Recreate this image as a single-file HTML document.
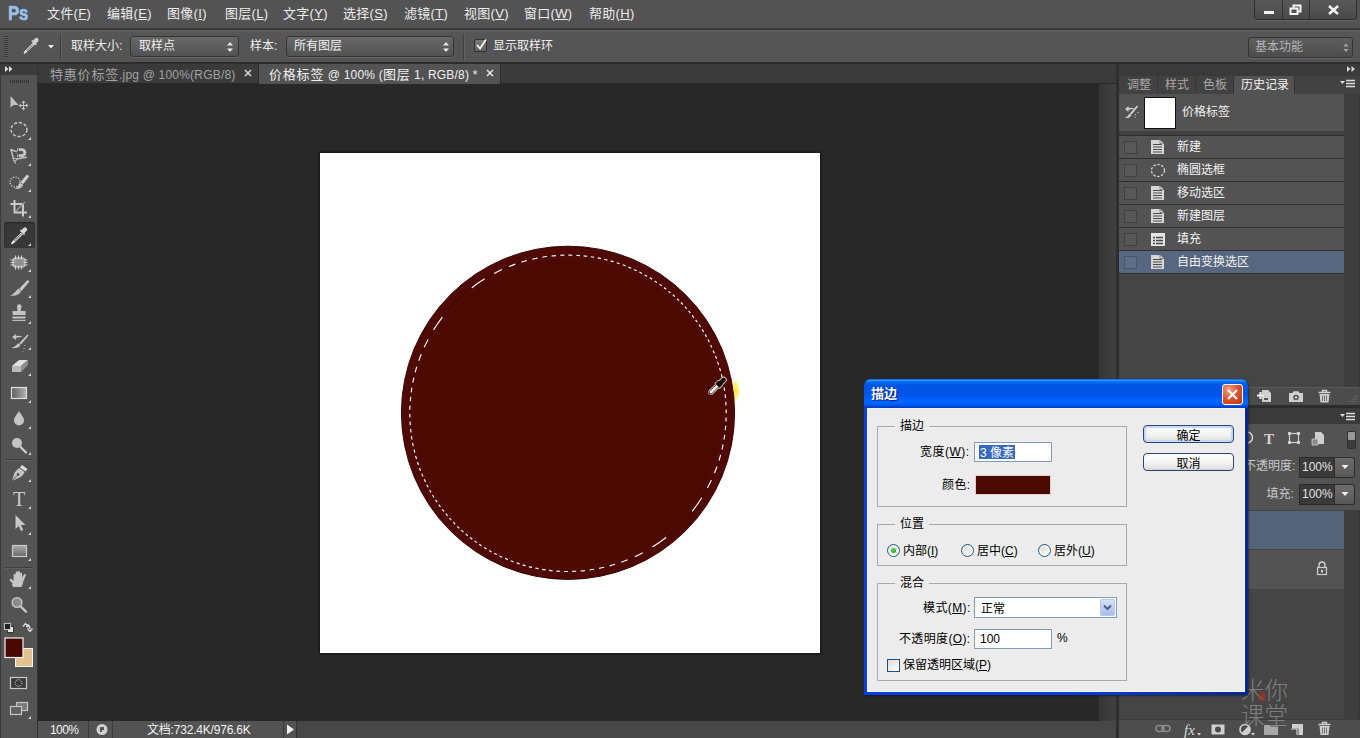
<!DOCTYPE html>
<html lang="zh-CN">
<head>
<meta charset="utf-8">
<title>Photoshop - 描边</title>
<style>
*{box-sizing:border-box;margin:0;padding:0}
html,body{width:1360px;height:738px;overflow:hidden;background:#282828}
body{position:relative;font-family:"Liberation Sans","Noto Sans CJK SC",sans-serif;font-size:12px;color:#e6e6e6}
.abs{position:absolute}
.t{position:absolute;white-space:nowrap;line-height:16px}
u{text-decoration:underline;text-underline-offset:1px}
/* menu bar */
#menubar{left:0;top:0;width:1360px;height:29px;background:#535353}
#menuline{left:0;top:28px;width:1360px;height:2px;background:#383838}
#optbar{left:0;top:30px;width:1360px;height:33px;background:linear-gradient(#626262,#565656 8%,#535353)}
#optline{left:0;top:62px;width:1360px;height:2px;background:#3a3a3a}
.menu{top:6px;font-size:13px;color:#ececec;letter-spacing:0.3px}
.dd{position:absolute;border:1px solid #343434;border-radius:3px;background:linear-gradient(#686868,#525252);box-shadow:0 1px 0 rgba(255,255,255,.12)}
/* tool panel */
#tools{left:0;top:64px;width:37px;height:674px;background:#535353}
#tabstrip{left:37px;top:64px;width:1079px;height:19px;background:#3b3b3b}
#workspace{left:38px;top:83px;width:1077px;height:638px;background:#282828}
#status{left:38px;top:721px;width:1077px;height:17px;background:#535353}
/* right */
#right{left:1116px;top:64px;width:244px;height:674px;background:#424242}
.hc{left:1124px;width:13px;height:13px;background:#585858;border:1px solid #404040}
.cj{font-size:13px;letter-spacing:.8px}.la{font-size:12px;letter-spacing:.2px}
#optline{background:#2d2d2d}
</style>
</head>
<body>
<!-- MENUBAR -->
<div id="menubar" class="abs"></div>
<div id="menuline" class="abs"></div>
<div class="t" style="left:8px;top:2px;font-size:20px;line-height:22px;font-weight:bold;color:#9cc0e8;letter-spacing:-0.3px;transform:scaleX(.84);transform-origin:0 0;-webkit-text-stroke:.7px #9cc0e8;text-shadow:0 -1px 0 #2c4a78">Ps</div>
<div class="t menu" style="left:47px">文件(<u>F</u>)</div>
<div class="t menu" style="left:107px">编辑(<u>E</u>)</div>
<div class="t menu" style="left:167px">图像(<u>I</u>)</div>
<div class="t menu" style="left:225px">图层(<u>L</u>)</div>
<div class="t menu" style="left:283px">文字(<u>Y</u>)</div>
<div class="t menu" style="left:343px">选择(<u>S</u>)</div>
<div class="t menu" style="left:404px">滤镜(<u>T</u>)</div>
<div class="t menu" style="left:464px">视图(<u>V</u>)</div>
<div class="t menu" style="left:524px">窗口(<u>W</u>)</div>
<div class="t menu" style="left:589px">帮助(<u>H</u>)</div>
<!-- OPTIONS BAR -->
<div id="optbar" class="abs"></div>
<div id="optline" class="abs"></div>
<div class="t" style="left:71px;top:38px;color:#f0f0f0">取样大小:</div>
<div class="dd" style="left:130px;top:36px;width:109px;height:21px"></div>
<div class="t" style="left:139px;top:38px;color:#f0f0f0">取样点</div>
<div class="t" style="left:250px;top:38px;color:#f0f0f0">样本:</div>
<div class="dd" style="left:286px;top:36px;width:168px;height:21px"></div>
<div class="t" style="left:294px;top:38px;color:#f0f0f0">所有图层</div>
<div class="t" style="left:493px;top:38px;color:#f0f0f0">显示取样环</div>
<!-- TOOLS / TABS / WORKSPACE -->
<div id="tools" class="abs"></div>
<div id="tabstrip" class="abs"></div>
<div id="workspace" class="abs"></div>
<div id="status" class="abs"></div>
<div id="right" class="abs"></div>
<!-- WINDOW CONTROLS -->
<div class="abs" style="left:1254px;top:0;width:103px;height:20px;border:1px solid #2e2e2e;border-top:none;border-radius:0 0 4px 4px;background:linear-gradient(#595959,#4a4a4a);box-shadow:0 1px 0 rgba(255,255,255,.1)"></div>
<div class="abs" style="left:1282px;top:0;width:1px;height:19px;background:#333"></div>
<div class="abs" style="left:1309px;top:0;width:1px;height:19px;background:#333"></div>
<svg class="abs" style="left:1254px;top:0" width="103" height="20" viewBox="1254 0 103 20">
<rect x="1264" y="11" width="10" height="3" fill="#f2f2f2"/>
<path d="M1293.5 5.5h7v6h-7z" fill="none" stroke="#f2f2f2" stroke-width="2"/>
<path d="M1290.5 8.5h7v5.5h-7z" fill="#525252" stroke="#f2f2f2" stroke-width="2"/>
<path d="M1329 6l9 8M1338 6l-9 8" stroke="#f2f2f2" stroke-width="2.6"/>
</svg>
<!-- options bar extras -->
<div class="abs" style="left:4px;top:36px;width:4px;height:21px;background:repeating-linear-gradient(#3a3a3a 0 1px,#5c5c5c 1px 2px)"></div>
<svg class="abs" style="left:20px;top:34px" width="40" height="26" viewBox="20 34 40 26">
<path d="M25.5 53l-1.5 0.5 0.5-2 8.5-8.5 1.5 1.5z" fill="#e6e6e6" stroke="#e6e6e6" stroke-width="0.6"/>
<path d="M26.5 51l6.5-6.5" stroke="#555" stroke-width="1"/>
<path d="M31.5 41.5l4 4 1-1-0.5-1 2-2a2 2 0 00-3-3l-2 2-1-0.5z" fill="#d0d0d0"/>
<path d="M48 45h6l-3 3.5z" fill="#e8e8e8"/>
</svg>
<div class="abs" style="left:60px;top:34px;width:1px;height:26px;background:#3e3e3e"></div>
<div class="abs" style="left:61px;top:34px;width:1px;height:26px;background:#626262"></div>
<svg class="abs" style="left:225px;top:40px" width="10" height="14" viewBox="0 0 10 14"><path d="M2 5.5l3-3.5 3 3.5zM2 8.5l3 3.5 3-3.5z" fill="#e8e8e8"/></svg>
<svg class="abs" style="left:441px;top:40px" width="10" height="14" viewBox="0 0 10 14"><path d="M2 5.5l3-3.5 3 3.5zM2 8.5l3 3.5 3-3.5z" fill="#e8e8e8"/></svg>
<div class="abs" style="left:463px;top:34px;width:1px;height:26px;background:#3e3e3e"></div>
<div class="abs" style="left:464px;top:34px;width:1px;height:26px;background:#626262"></div>
<div class="abs" style="left:474px;top:39px;width:13px;height:13px;border:1px solid #2f2f2f;background:linear-gradient(#787878,#626262);border-radius:2px"></div>
<svg class="abs" style="left:474px;top:36px" width="16" height="16" viewBox="0 0 16 16"><path d="M3 9l3 3.5 6-9" fill="none" stroke="#f0f0f0" stroke-width="1.8"/></svg>
<div class="dd" style="left:1248px;top:37px;width:105px;height:21px;background:linear-gradient(#5e5e5e,#4c4c4c)"></div>
<div class="t" style="left:1255px;top:39px;color:#b4b4b4">基本功能</div>
<svg class="abs" style="left:1341px;top:41px" width="10" height="14" viewBox="0 0 10 14"><path d="M2.5 5.5l2.5-3 2.5 3zM2.5 8l2.5 3 2.5-3z" fill="#a8a8a8"/></svg>
<!-- DOC TABS -->
<div class="abs" style="left:258px;top:64px;width:243px;height:20px;background:#535353;border-left:1px solid #2c2c2c;border-right:1px solid #2c2c2c"></div>
<div class="t" id="tab1" style="left:50px;top:66px;color:#a2a2a2;line-height:17px"><span class="cj">特惠价标签</span><span class="la">.jpg @ 100%(RGB/8)</span></div>
<div class="t" id="tab2" style="left:269px;top:66px;color:#f0f0f0;line-height:17px"><span class="cj">价格标签</span><span class="la"> @ 100% (</span><span class="cj">图层</span><span class="la"> 1, RGB/8) *</span></div>
<svg class="abs" style="left:244px;top:69px" width="8" height="8" viewBox="0 0 8 8"><path d="M1 1l6 6M7 1l-6 6" stroke="#d8d8d8" stroke-width="1.5"/></svg>
<svg class="abs" style="left:486px;top:69px" width="8" height="8" viewBox="0 0 8 8"><path d="M1 1l6 6M7 1l-6 6" stroke="#e8e8e8" stroke-width="1.5"/></svg>
<!-- scrollbar column + status -->
<div class="abs" style="left:1099px;top:84px;width:17px;height:637px;background:linear-gradient(90deg,#363636,#404040)"></div>
<div class="abs" style="left:1116px;top:64px;width:3px;height:674px;background:#2e2e2e"></div>
<div class="abs" style="left:38px;top:721px;width:1078px;height:17px;background:#474747"></div>
<div class="abs" style="left:38px;top:721px;width:258px;height:17px;background:#535353"></div>
<div class="abs" style="left:88px;top:721px;width:1px;height:17px;background:#3c3c3c"></div>
<div class="abs" style="left:112px;top:721px;width:1px;height:17px;background:#3c3c3c"></div>
<div class="abs" style="left:283px;top:721px;width:1px;height:17px;background:#3c3c3c"></div>
<div class="abs" style="left:296px;top:721px;width:1px;height:17px;background:#333"></div>
<div class="t" style="left:50px;top:722px;color:#f2f2f2;letter-spacing:-.6px">100%</div>
<div class="t" style="left:147px;top:722px;color:#f2f2f2;letter-spacing:-.2px">文档:732.4K/976.6K</div>
<svg class="abs" style="left:94px;top:722px" width="16" height="15" viewBox="0 0 16 15"><circle cx="8" cy="7.5" r="5.5" fill="#d0d0d0"/><path d="M6 5h4v3h-2v2h-2z" fill="#555"/></svg>
<svg class="abs" style="left:285px;top:723px" width="10" height="13" viewBox="0 0 10 13"><path d="M2 1.5l7 5-7 5z" fill="#f0f0f0"/></svg>
<!-- TOOL PANEL ICONS -->
<div class="abs" style="left:0;top:64px;width:38px;height:11px;background:#3b3b3b"></div>
<div class="abs" style="left:0;top:64px;width:1px;height:674px;background:#3a3a3a"></div>
<div class="abs" style="left:37px;top:64px;width:1px;height:674px;background:#333"></div>
<div class="abs" style="left:4px;top:222px;width:31px;height:26px;background:#383838;border-radius:3px;box-shadow:inset 0 1px 2px #222"></div>
<svg class="abs" style="left:0;top:64px" width="38" height="674" viewBox="0 64 38 674" fill="none" stroke="none">
<g fill="#e0e0e0"><path d="M5 66l3.5 3L5 72zM9 66l3.5 3L9 72z"/></g>
<g fill="#333"><path d="M10 80h1v3h-1zM12 80h1v3h-1zM14 80h1v3h-1zM16 80h1v3h-1zM18 80h1v3h-1zM20 80h1v3h-1zM22 80h1v3h-1zM24 80h1v3h-1zM26 80h1v3h-1zM28 80h1v3h-1z"/></g>
<g fill="#d2d2d2">
<path d="M31 137v3h-3zM31 163v3h-3zM31 189v3h-3zM31 215v3h-3zM31 243v3h-3zM31 269v3h-3zM31 295v3h-3zM31 321v3h-3zM31 347v3h-3zM31 373v3h-3zM31 400v3h-3zM31 426v3h-3zM31 452v3h-3zM31 479v3h-3zM31 506v3h-3zM31 532v3h-3zM31 558v3h-3zM31 586v3h-3zM31 716v3h-3z" transform="translate(0,0)"/>
</g>
<!-- move -->
<path d="M10.5 96v11.5l3-2.5h5z" fill="#c4c4c4"/>
<path d="M23.5 100.5l2 2.5h-1.5v2h2v-1.5l2.5 2-2.5 2v-1.5h-2v2h1.5l-2 2.5-2-2.5h1.5v-2h-2v1.5l-2.5-2 2.5-2v1.5h2v-2h-1.5z" fill="#c4c4c4"/>
<!-- ellipse marquee -->
<ellipse cx="19" cy="129.5" rx="8" ry="7" stroke="#cacaca" stroke-width="1.4" stroke-dasharray="3.2 1.8"/>
<!-- lasso (magnetic poly) -->
<path d="M17 151.8L11 149.5l2.7 10 13-2.3" stroke="#c4c4c4" stroke-width="1.4" stroke-linejoin="round" fill="none"/>
<path d="M17 148.3h5a4.3 4.3 0 010 8.6h-5v-2.6h4.8a1.7 1.7 0 000-3.4H17z" fill="#c8c8c8"/>
<path d="M18.3 148.3v2.6M18.3 154.3v2.6" stroke="#555" stroke-width="1"/>
<rect x="13.2" y="158.3" width="3" height="2.4" fill="#535353" stroke="#c4c4c4" stroke-width=".8"/>
<path d="M14.5 161l1 2.5" stroke="#c4c4c4" stroke-width="1.3"/>
<!-- quick selection -->
<circle cx="15" cy="182" r="5" stroke="#d0d0d0" stroke-width="1.3" stroke-dasharray="1.2 1.420"/>
<path d="M27 174.5l2.2 1.8-6 7.7-2.7-2z" fill="#d0d0d0"/>
<path d="M20 182.5l3.2 2.5c-1.2 3-4.5 4.5-8.5 4 2.3-1.2 3.8-3.2 5.3-6.5z" fill="#c4c4c4"/>
<!-- crop -->
<path d="M14.5 200v12.5h12.5M10.5 204h12.5v12.5" stroke="#cacaca" stroke-width="2"/>
<path d="M16 211l9-9" stroke="#9a9a9a" stroke-width="1.2"/>
<!-- eyedropper (selected) -->
<path d="M13 243.5l-1.5 0.5 0.5-2 9-9 1.5 1.5z" fill="#ededed" stroke="#ededed" stroke-width="0.6"/>
<path d="M14.3 241l7-7" stroke="#444" stroke-width="1"/>
<path d="M20 231l4 4 1-1-0.5-1 2-2a2 2 0 00-3-3l-2 2-1-0.5z" fill="#d8d8d8"/>
<!-- patch / healing -->
<rect x="13" y="258" width="12" height="9" rx="2" fill="#8e8e8e" stroke="#d2d2d2" stroke-width="1"/>
<path d="M15.5 255.5v4M18.5 255.5v4M21.5 255.5v4M15.5 265.5v4M18.5 265.5v4M21.5 265.5v4M10.5 260h4M10.5 262.5h4M10.5 265h4M23.5 260h4M23.5 262.5h4M23.5 265h4" stroke="#d6d6d6" stroke-width="1.1"/>
<!-- brush -->
<path d="M27.5 280l2 1.5-8 9.5-2.5-2z" fill="#cacaca"/>
<path d="M18 288.5l3 2.8c-1.5 3.5-5.5 5-11 4.2 3.5-1.2 5.5-3.5 8-7z" fill="#c4c4c4"/>
<!-- stamp -->
<path d="M17 306.5a2.3 2.3 0 014.6 0c0 1.5-1 2.5-1 4.5h5v4h-13v-4h5c0-2-0.6-3-0.6-4.5z" fill="#c4c4c4"/>
<rect x="12.5" y="316.5" width="13" height="2" fill="#c4c4c4"/>
<rect x="12.5" y="319.8" width="13" height="1.2" fill="#bdbdbd"/>
<!-- history brush -->
<path d="M27.5 334.5l1 1-7.5 9-1.5-1.5z" fill="#cacaca"/>
<path d="M18.5 343l2 2c-1.5 3-5 3.5-9.5 3 3.5-1 5-2.5 7.5-5z" fill="#c4c4c4"/>
<path d="M12 337l4-3v2c3-0.5 5 0 6.5 1-2.5 0-4.5 0.3-6.5 1v2z" fill="#c4c4c4"/>
<path d="M25 345v1M24 348v1M23 351v0.5" stroke="#c4c4c4" stroke-width="1"/>
<!-- eraser -->
<path d="M12 366l7-6h9l-7 6z" fill="#e0e0e0"/>
<path d="M12 366h9v6h-9z" fill="#b8b8b8"/>
<path d="M21 366l7-6v5l-7 7z" fill="#8e8e8e"/>
<!-- gradient -->
<defs><linearGradient id="gr1" x1="0" x2="1"><stop offset="0" stop-color="#5e5e5e"/><stop offset="1" stop-color="#b4b4b4"/></linearGradient>
<linearGradient id="gr2" x1="0" x2="0" y1="0" y2="1"><stop offset="0" stop-color="#a8a8a8"/><stop offset="1" stop-color="#6c6c6c"/></linearGradient></defs>
<rect x="11.5" y="387.5" width="15" height="11" fill="url(#gr1)" stroke="#dcdcdc" stroke-width="1.2"/>
<!-- blur drop -->
<path d="M19 411c2.5 4 5 6.5 5 9.5a5 5 0 01-10 0c0-3 2.5-5.5 5-9.5z" fill="#c4c4c4"/>
<!-- dodge -->
<circle cx="17" cy="443" r="5" fill="#c4c4c4"/>
<path d="M20.5 447l5.5 5.5" stroke="#d0d0d0" stroke-width="2.2" stroke-linecap="round"/>
<!-- separators -->
<path d="M5 459.5h28M5 567.5h28" stroke="#3e3e3e" stroke-width="1"/>
<path d="M5 460.5h28M5 568.5h28" stroke="#606060" stroke-width="1"/>
<!-- pen -->
<path d="M22 465l5.5 4-2 2.5-5.5-4z" fill="#dedede"/>
<path d="M19.5 468l5 4c-1 3-3 5-6 6l-6.5 3 2-7c1-2.5 3-4.5 5.5-6z" fill="#c4c4c4"/>
<circle cx="18" cy="474.5" r="1.3" fill="#444"/>
<path d="M12 481l5-5.5" stroke="#444" stroke-width="0.8"/>
<!-- T -->
<text x="19" y="506" text-anchor="middle" font-family="Liberation Serif,serif" font-size="20" fill="#cacaca">T</text>
<!-- path select arrow -->
<path d="M15.5 515v14l3.2-3 2.3 5 2.2-1-2.3-5h4.6z" fill="#c8c8c8"/>
<!-- rectangle -->
<rect x="12.5" y="545.5" width="14" height="11" fill="url(#gr2)" stroke="#c8c8c8" stroke-width="1.2"/>
<!-- hand -->
<g transform="translate(19.5,580.5) scale(1.2) translate(-19,-576)"><path d="M13.5 579l-2.5-3c-0.8-1 0.5-2 1.5-1l1.5 1.5v-5c0-1.2 1.8-1.2 1.8 0v-2c0-1.2 1.8-1.2 1.8 0v-0.5c0-1.2 1.8-1.2 1.8 0v1.5c0-1.2 1.8-1.2 1.8 0v3l1.5-2.5c0.7-1 2-0.3 1.5 0.8l-2 5c-0.5 2-1 3.7-1.5 4.7h-7c-0.5-1-0.7-1.5-1.2-2.5z" fill="#c4c4c4"/></g>
<!-- zoom -->
<circle cx="17" cy="602.5" r="4.8" fill="#8a8a8a" stroke="#c4c4c4" stroke-width="1.6"/>
<path d="M20.8 606.5l5.2 5.2" stroke="#c4c4c4" stroke-width="2.4" stroke-linecap="round"/>
<!-- default colors / swap -->
<rect x="7.5" y="626.5" width="6" height="6" fill="#e4e4e4" stroke="#222" stroke-width="0.8"/>
<rect x="4.5" y="623.5" width="6" height="6" fill="#222" stroke="#ddd" stroke-width="0.8"/>
<path d="M23 626.5l2.5-3 2.5 3h-1.8M25.5 624.5c3 0 4.5 1.5 4.5 4.5M27.5 628.5l2.5 3 2.5-3" stroke="#d8d8d8" stroke-width="1.3" fill="none"/>
<!-- swatches -->
<rect x="15.5" y="648.5" width="17" height="18" fill="#e3c28e" stroke="#f4f4f4" stroke-width="1"/>
<rect x="5" y="638" width="18" height="19.5" fill="#4b0802" stroke="#f4f4f4" stroke-width="1.2"/>
<!-- quick mask -->
<rect x="10.5" y="677.5" width="16" height="11" fill="#3a3a3a" stroke="#cacaca" stroke-width="1.2"/>
<circle cx="18.5" cy="683" r="3.3" stroke="#e0e0e0" stroke-width="1" stroke-dasharray="1 1"/>
<!-- screen mode -->
<rect x="16.5" y="702.5" width="11" height="8" fill="#7a7a7a" stroke="#c4c4c4" stroke-width="1.2"/>
<rect x="10.5" y="706.5" width="11" height="8" fill="#606060" stroke="#c4c4c4" stroke-width="1.2"/>
</svg>
<!-- RIGHT PANELS -->
<div class="abs" style="left:1119px;top:64px;width:241px;height:12px;background:#3a3a3a"></div>
<svg class="abs" style="left:1346px;top:65px" width="10" height="8" viewBox="0 0 10 8"><path d="M1 1l3.5 3L1 7zM5.5 1L9 4 5.5 7z" fill="#d8d8d8"/></svg>
<div class="abs" style="left:1119px;top:76px;width:241px;height:18px;background:#424242"></div>
<div class="abs" style="left:1157px;top:76px;width:1px;height:17px;background:#353535"></div>
<div class="abs" style="left:1195px;top:76px;width:1px;height:17px;background:#353535"></div>
<div class="abs" style="left:1233px;top:76px;width:62px;height:18px;background:#535353;border-left:1px solid #333;border-right:1px solid #333"></div>
<div class="t" style="left:1127px;top:77px;color:#a8a8a8">调整</div>
<div class="t" style="left:1165px;top:77px;color:#a8a8a8">样式</div>
<div class="t" style="left:1203px;top:77px;color:#a8a8a8">色板</div>
<div class="t" style="left:1241px;top:77px;color:#f2f2f2">历史记录</div>
<svg class="abs" style="left:1340px;top:79px" width="16" height="10" viewBox="0 0 16 10"><path d="M0 2h5l-2.5 3z" fill="#ddd"/><path d="M6 1.5h9M6 4.5h9M6 7.5h9" stroke="#ddd" stroke-width="1.3"/></svg>
<!-- history body -->
<div class="abs" style="left:1119px;top:94px;width:241px;height:294px;background:#454545"></div>
<div class="abs" style="left:1344px;top:94px;width:16px;height:294px;background:linear-gradient(90deg,#3e3e3e,#3e3e3e 85%,#343434)"></div>
<div class="abs" style="left:1119px;top:94px;width:225px;height:37px;background:#535353"></div>
<div class="abs" style="left:1119px;top:131px;width:225px;height:4px;background:#404040"></div>
<div class="abs" style="left:1144px;top:97px;width:32px;height:32px;background:#fff;border:1px solid #111"></div>
<svg class="abs" style="left:1123px;top:103px" width="18" height="18" viewBox="0 0 18 18"><path d="M14 2.5l1 1-6.5 8-1.5-1.2z" fill="#d8d8d8"/><path d="M6.5 10.5l2 1.8c-1.3 2.5-3.5 3-7 2.7 2.5-1 3.5-2.3 5-4.5z" fill="#ccc"/><path d="M2 6l3.5-3v2c2.5-.5 4.5 0 6 1-2.5 0-4 .3-6 1v2z" fill="#ccc"/><path d="M12.5 11v1M12 13.5v1M15 9v1" stroke="#ccc"/></svg>
<div class="t" style="left:1182px;top:104px;color:#f2f2f2">价格标签</div>
<div class="abs" style="left:1119px;top:136px;width:225px;height:22px;background:#535353"></div>
<div class="abs" style="left:1119px;top:159px;width:225px;height:22px;background:#535353"></div>
<div class="abs" style="left:1119px;top:182px;width:225px;height:22px;background:#535353"></div>
<div class="abs" style="left:1119px;top:205px;width:225px;height:22px;background:#535353"></div>
<div class="abs" style="left:1119px;top:228px;width:225px;height:22px;background:#535353"></div>
<div class="abs" style="left:1119px;top:251px;width:225px;height:22px;background:#586780"></div>
<div class="abs" style="left:1119px;top:135px;width:225px;height:1px;background:#303030"></div><div class="abs" style="left:1119px;top:158px;width:225px;height:1px;background:#303030"></div><div class="abs" style="left:1119px;top:181px;width:225px;height:1px;background:#303030"></div><div class="abs" style="left:1119px;top:204px;width:225px;height:1px;background:#303030"></div><div class="abs" style="left:1119px;top:227px;width:225px;height:1px;background:#303030"></div><div class="abs" style="left:1119px;top:250px;width:225px;height:1px;background:#303030"></div><div class="abs" style="left:1119px;top:273px;width:225px;height:1px;background:#303030"></div>
<div class="abs hc" style="top:141px"></div><div class="abs hc" style="top:164px"></div><div class="abs hc" style="top:187px"></div><div class="abs hc" style="top:210px"></div><div class="abs hc" style="top:233px"></div><div class="abs hc" style="top:256px;background:#5f6f8a;border-color:#48556b"></div>
<div class="t" style="left:1177px;top:139px;color:#f2f2f2">新建</div>
<div class="t" style="left:1177px;top:162px;color:#f2f2f2">椭圆选框</div>
<div class="t" style="left:1177px;top:185px;color:#f2f2f2">移动选区</div>
<div class="t" style="left:1177px;top:208px;color:#f2f2f2">新建图层</div>
<div class="t" style="left:1177px;top:231px;color:#f2f2f2">填充</div>
<div class="t" style="left:1177px;top:254px;color:#f2f2f2">自由变换选区</div>
<svg class="abs" style="left:1148px;top:136px" width="20" height="138" viewBox="1148 135 20 138">
<defs><g id="docic"><path d="M0 0h9l4 3.5V14H0z" fill="#d6d6d6"/><path d="M2 4.5h9M2 7h9M2 9.5h9M2 12h9" stroke="#4c4c4c" stroke-width="1"/><path d="M9 0v3.5h4" fill="none" stroke="#777" stroke-width=".8"/></g></defs>
<use href="#docic" x="1151" y="139"/>
<ellipse cx="1158" cy="169.5" rx="6.5" ry="6" fill="none" stroke="#d8d8d8" stroke-width="1.2" stroke-dasharray="2.5 1.5"/>
<use href="#docic" x="1151" y="185"/>
<use href="#docic" x="1151" y="208"/>
<rect x="1151.5" y="232.5" width="13" height="12" fill="#e4e4e4" stroke="#e4e4e4"/><path d="M1153 236.5h10M1153 239.5h10M1153 242.5h10" stroke="#444" stroke-width="1.4"/><path d="M1155.5 235v9" stroke="#e4e4e4" stroke-width="1"/>
<use href="#docic" x="1151" y="254"/>
</svg>
<!-- history footer -->
<div class="abs" style="left:1119px;top:387px;width:241px;height:18px;background:#4c4c4c;border-top:1px solid #5a5a5a"></div>
<svg class="abs" style="left:1250px;top:388px" width="100" height="18" viewBox="1250 388 100 18">
<path d="M1262 390h6l3 3v9h-9z" fill="#cfcfcf"/><path d="M1257 395.5h7M1260.5 392v7" stroke="#e8e8e8" stroke-width="2.2"/><path d="M1264 398h4v2h-4z" fill="#555"/>
<path d="M1289 393h3.5l1-1.8h5l1 1.8h3.5v9h-14z" fill="#cfcfcf"/><circle cx="1296" cy="397.5" r="2.8" fill="#4d4d4d"/><circle cx="1296" cy="397.5" r="1.3" fill="#cfcfcf"/>
<path d="M1318.5 392.5h12M1322.5 392v-1.5h4v1.5" stroke="#cfcfcf" stroke-width="1.4" fill="none"/><path d="M1319.5 394h10l-1 8.5h-8z" fill="#cfcfcf"/><path d="M1322.5 395.5v5.5M1324.5 395.5v5.5M1326.5 395.5v5.5" stroke="#555" stroke-width=".8"/>
</svg>
<svg class="abs" style="left:1346px;top:392px" width="12" height="12" viewBox="0 0 12 12"><path d="M10 3v1M8 5v1M10 5v1M6 7v1M8 7v1M10 7v1M4 9v1M6 9v1M8 9v1M10 9v1" stroke="#777" stroke-width="1"/></svg>
<!-- LAYERS PANEL -->
<div class="abs" style="left:1119px;top:405px;width:241px;height:3px;background:#2c2c2c"></div>
<div class="abs" style="left:1119px;top:408px;width:241px;height:16px;background:#3a3a3a"></div>
<svg class="abs" style="left:1340px;top:412px" width="16" height="10" viewBox="0 0 16 10"><path d="M0 2h5l-2.5 3z" fill="#ddd"/><path d="M6 1.5h9M6 4.5h9M6 7.5h9" stroke="#ddd" stroke-width="1.3"/></svg>
<div class="abs" style="left:1119px;top:424px;width:241px;height:86px;background:#535353"></div>
<svg class="abs" style="left:1246px;top:428px" width="112" height="24" viewBox="1246 428 112 24">
<path d="M1247 432a5 5 0 010 11" fill="none" stroke="#cfcfcf" stroke-width="1.5"/>
<text x="1269" y="444" text-anchor="middle" font-family="Liberation Serif,serif" font-weight="bold" font-size="15" fill="#d2d2d2">T</text>
<rect x="1289.5" y="433.5" width="9" height="9" fill="none" stroke="#cfcfcf" stroke-width="1.2"/><path d="M1288 432h3v3h-3zM1297 432h3v3h-3zM1288 441h3v3h-3zM1297 441h3v3h-3z" fill="#cfcfcf"/>
<path d="M1315 432h6l3 3v9h-9z" fill="#cfcfcf"/><path d="M1312 439h6v6h-6z" fill="#8a8a8a" stroke="#cfcfcf" stroke-width=".8"/>
<rect x="1347.5" y="431.5" width="8" height="17" rx="1" fill="#3c3c3c" stroke="#333"/><rect x="1348" y="432" width="7" height="8" rx="1" fill="#9a9a9a"/>
</svg>
<div class="t" style="left:1244px;top:458px;color:#c8c8c8">不透明度:</div>
<div class="t" style="left:1266.5px;top:486px;color:#c8c8c8">填充:</div>
<div class="abs" style="left:1299px;top:457px;width:36px;height:21px;background:#3a3a3a;border:1px solid #2c2c2c"></div>
<div class="abs" style="left:1335px;top:457px;width:20px;height:21px;background:linear-gradient(#6c6c6c,#585858);border:1px solid #2c2c2c;border-left:none;border-radius:0 3px 3px 0"></div>
<div class="abs" style="left:1299px;top:484px;width:36px;height:21px;background:#3a3a3a;border:1px solid #2c2c2c"></div>
<div class="abs" style="left:1335px;top:484px;width:20px;height:21px;background:linear-gradient(#6c6c6c,#585858);border:1px solid #2c2c2c;border-left:none;border-radius:0 3px 3px 0"></div>
<div class="t" style="left:1302px;top:459px;color:#e0e0e0">100%</div>
<div class="t" style="left:1302px;top:486px;color:#e0e0e0">100%</div>
<svg class="abs" style="left:1340px;top:464px" width="10" height="6" viewBox="0 0 10 6"><path d="M1.5 1h7l-3.5 4z" fill="#f0f0f0"/></svg>
<svg class="abs" style="left:1340px;top:491px" width="10" height="6" viewBox="0 0 10 6"><path d="M1.5 1h7l-3.5 4z" fill="#f0f0f0"/></svg>
<div class="abs" style="left:1119px;top:510px;width:241px;height:209px;background:#454545"></div>
<div class="abs" style="left:1344px;top:510px;width:16px;height:209px;background:linear-gradient(90deg,#3e3e3e,#3e3e3e 85%,#343434)"></div>
<div class="abs" style="left:1119px;top:511px;width:225px;height:38px;background:#566479"></div>
<div class="abs" style="left:1119px;top:550px;width:225px;height:39px;background:#535353"></div>
<svg class="abs" style="left:1315px;top:561px" width="14" height="15" viewBox="0 0 14 15"><path d="M4 6V4a3 3 0 016 0v2" fill="none" stroke="#cfcfcf" stroke-width="1.4"/><rect x="2.5" y="6.5" width="9" height="7" fill="#555" stroke="#cfcfcf" stroke-width="1.2"/><rect x="6" y="9" width="2" height="2.5" fill="#cfcfcf"/></svg>
<!-- layers footer -->
<div class="abs" style="left:1119px;top:719px;width:241px;height:19px;background:#4d4d4d;border-top:1px solid #3a3a3a"></div>
<svg class="abs" style="left:1150px;top:720px" width="190" height="18" viewBox="1150 720 190 18">
<rect x="1156" y="725.5" width="8" height="6" rx="3" fill="none" stroke="#8c8c8c" stroke-width="1.6"/><rect x="1162" y="725.5" width="8" height="6" rx="3" fill="none" stroke="#8c8c8c" stroke-width="1.6"/>
<text x="1184" y="735" font-family="Liberation Serif,serif" font-style="italic" font-size="15" fill="#d8d8d8">fx</text><path d="M1197 733h4l-2 2.5z" fill="#d8d8d8"/>
<rect x="1211.5" y="724.5" width="13" height="10" fill="#cfcfcf"/><circle cx="1218" cy="729.5" r="3" fill="#4d4d4d"/>
<circle cx="1245" cy="729.5" r="5" fill="#4d4d4d" stroke="#d0d0d0" stroke-width="1.6"/><path d="M1248.9 725.6a5.5 5.5 0 01-7.8 7.8z" fill="#d0d0d0"/><path d="M1251 733h4l-2 2.5z" fill="#d8d8d8"/>
<path d="M1264 725h5l1.5 1.5h7.5v8.5h-14z" fill="#a8a8a8"/>
<path d="M1292 724h11v11h-11z" fill="#cfcfcf"/><path d="M1291.5 728.5h7v7h-7z" fill="#4d4d4d"/><path d="M1291 729h6v6" fill="none" stroke="#cfcfcf" stroke-width="1.2"/>
<path d="M1318.5 724.5h12M1322.5 724v-1.5h4v1.5" stroke="#cfcfcf" stroke-width="1.4" fill="none"/><path d="M1319.5 726h10l-1 9h-8z" fill="#cfcfcf"/><path d="M1322.5 727.5v6M1324.5 727.5v6M1326.5 727.5v6" stroke="#555" stroke-width=".8"/>
</svg>
<!-- watermark -->
<div class="t" style="left:1241px;top:679px;font-size:23.5px;line-height:24.5px;color:rgba(165,165,165,.6);letter-spacing:0;font-weight:300">米你<br>课堂</div>
<div class="abs" style="left:1258px;top:691px;width:8px;height:11px;border-radius:50%;background:rgba(170,50,30,.5);filter:blur(.6px)"></div>
<!-- CANVAS -->
<div class="abs" style="left:320px;top:153px;width:500px;height:500px;background:#fff;box-shadow:0 0 2px 1px rgba(0,0,0,.55)"></div>
<svg class="abs" style="left:320px;top:153px" width="500" height="500" viewBox="320 153 500 500">
<defs>
<radialGradient id="glow"><stop offset="0" stop-color="#ffe92e"/><stop offset=".55" stop-color="#fff06a" stop-opacity=".85"/><stop offset="1" stop-color="#fff9b0" stop-opacity="0"/></radialGradient>
<filter id="soft" color-interpolation-filters="sRGB" x="-5%" y="-5%" width="110%" height="110%"><feGaussianBlur stdDeviation=".45"/></filter>
</defs>
<ellipse cx="735.5" cy="390.5" rx="5" ry="12.5" fill="url(#glow)"/>
<g filter="url(#soft)">
<circle cx="568" cy="412.8" r="166.6" fill="#500a06" stroke="#340503" stroke-width="1"/>
<circle cx="568" cy="412.8" r="159" fill="#4c0902"/>
<circle cx="568" cy="413.3" r="156" fill="none" stroke="#5a0e0e" stroke-width="2.5" opacity=".45"/>
</g>
<circle cx="568" cy="413.3" r="158.2" fill="none" stroke="#3a0703" stroke-width="1" opacity=".7"/>
<path id="antsp" d="M726.1 417.4A158.2 158.2 0 0 1 726.0 421.5M725.7 425.8A158.2 158.2 0 0 1 725.3 430.2M724.7 434.8A158.2 158.2 0 0 1 724.0 439.5M723.1 444.4A158.2 158.2 0 0 1 722.0 449.5M720.6 454.9A158.2 158.2 0 0 1 719.0 460.5M717.0 466.5A158.2 158.2 0 0 1 714.5 473.0M711.4 480.1A158.2 158.2 0 0 1 707.4 488.1M701.8 497.7A158.2 158.2 0 0 1 692.2 511.3M666.0 537.5A158.2 158.2 0 0 1 652.4 547.1M642.8 552.7A158.2 158.2 0 0 1 634.8 556.7M627.7 559.8A158.2 158.2 0 0 1 621.2 562.3M615.2 564.3A158.2 158.2 0 0 1 609.6 565.9M604.2 567.3A158.2 158.2 0 0 1 599.1 568.4M594.2 569.3A158.2 158.2 0 0 1 589.5 570.0M584.9 570.6A158.2 158.2 0 0 1 580.5 571.0M576.2 571.3A158.2 158.2 0 0 1 572.1 571.4M568.0 571.5A158.2 158.2 0 0 1 564.0 571.5M560.2 571.3A158.2 158.2 0 0 1 556.4 571.1M552.7 570.8A158.2 158.2 0 0 1 549.1 570.4M545.6 569.9A158.2 158.2 0 0 1 542.1 569.4M538.7 568.8A158.2 158.2 0 0 1 535.4 568.1M532.1 567.4A158.2 158.2 0 0 1 528.9 566.6M525.7 565.8A158.2 158.2 0 0 1 522.6 564.9M519.6 563.9A158.2 158.2 0 0 1 516.6 562.9M513.6 561.9A158.2 158.2 0 0 1 510.7 560.8M507.9 559.6A158.2 158.2 0 0 1 505.1 558.4M502.3 557.2A158.2 158.2 0 0 1 499.6 555.9M496.9 554.6A158.2 158.2 0 0 1 494.2 553.3M491.6 551.9A158.2 158.2 0 0 1 489.1 550.4M486.6 548.9A158.2 158.2 0 0 1 484.1 547.4M481.6 545.9A158.2 158.2 0 0 1 479.2 544.3M476.9 542.6A158.2 158.2 0 0 1 474.5 540.9M472.3 539.2A158.2 158.2 0 0 1 470.0 537.5M467.8 535.7A158.2 158.2 0 0 1 465.6 533.9M463.5 532.0A158.2 158.2 0 0 1 461.3 530.1M459.3 528.2A158.2 158.2 0 0 1 457.2 526.3M455.2 524.3A158.2 158.2 0 0 1 453.3 522.2M451.3 520.2A158.2 158.2 0 0 1 449.4 518.0M447.6 515.9A158.2 158.2 0 0 1 445.8 513.7M444.0 511.5A158.2 158.2 0 0 1 442.2 509.3M440.5 507.0A158.2 158.2 0 0 1 438.8 504.7M437.2 502.3A158.2 158.2 0 0 1 435.6 499.9M434.0 497.5A158.2 158.2 0 0 1 432.5 495.0M431.0 492.5A158.2 158.2 0 0 1 429.6 489.9M428.2 487.3A158.2 158.2 0 0 1 426.8 484.7M425.5 482.0A158.2 158.2 0 0 1 424.2 479.3M423.0 476.5A158.2 158.2 0 0 1 421.8 473.7M420.6 470.9A158.2 158.2 0 0 1 419.5 468.0M418.5 465.0A158.2 158.2 0 0 1 417.5 462.0M416.5 459.0A158.2 158.2 0 0 1 415.6 455.9M414.8 452.7A158.2 158.2 0 0 1 414.0 449.5M413.3 446.2A158.2 158.2 0 0 1 412.6 442.9M412.0 439.5A158.2 158.2 0 0 1 411.4 436.1M411.0 432.5A158.2 158.2 0 0 1 410.6 428.9M410.3 425.2A158.2 158.2 0 0 1 410.0 421.5M409.9 417.6A158.2 158.2 0 0 1 409.8 413.7M409.8 409.7A158.2 158.2 0 0 1 410.0 405.5M410.3 401.2A158.2 158.2 0 0 1 410.7 396.8M411.2 392.3A158.2 158.2 0 0 1 411.9 387.6M412.8 382.7A158.2 158.2 0 0 1 413.9 377.6M415.2 372.3A158.2 158.2 0 0 1 416.8 366.7M418.8 360.7A158.2 158.2 0 0 1 421.2 354.3M424.2 347.3A158.2 158.2 0 0 1 428.1 339.4M433.5 330.0A158.2 158.2 0 0 1 442.4 317.1M471.8 287.7A158.2 158.2 0 0 1 484.7 278.8M494.1 273.4A158.2 158.2 0 0 1 502.0 269.5M509.0 266.5A158.2 158.2 0 0 1 515.4 264.1M521.4 262.1A158.2 158.2 0 0 1 527.0 260.5M532.3 259.2A158.2 158.2 0 0 1 537.4 258.1M542.3 257.2A158.2 158.2 0 0 1 547.0 256.5M551.5 256.0A158.2 158.2 0 0 1 555.9 255.6M560.2 255.3A158.2 158.2 0 0 1 564.4 255.1M568.4 255.1A158.2 158.2 0 0 1 572.3 255.2M576.2 255.3A158.2 158.2 0 0 1 580.0 255.6M583.6 255.9A158.2 158.2 0 0 1 587.2 256.3M590.8 256.7A158.2 158.2 0 0 1 594.2 257.3M597.6 257.9A158.2 158.2 0 0 1 600.9 258.6M604.2 259.3A158.2 158.2 0 0 1 607.4 260.1M610.6 260.9A158.2 158.2 0 0 1 613.7 261.8M616.7 262.8A158.2 158.2 0 0 1 619.7 263.8M622.7 264.8A158.2 158.2 0 0 1 625.6 265.9M628.4 267.1A158.2 158.2 0 0 1 631.2 268.3M634.0 269.5A158.2 158.2 0 0 1 636.7 270.8M639.4 272.1A158.2 158.2 0 0 1 642.0 273.5M644.6 274.9A158.2 158.2 0 0 1 647.2 276.3M649.7 277.8A158.2 158.2 0 0 1 652.2 279.3M654.6 280.9A158.2 158.2 0 0 1 657.0 282.5M659.4 284.1A158.2 158.2 0 0 1 661.7 285.8M664.0 287.5A158.2 158.2 0 0 1 666.2 289.3M668.4 291.1A158.2 158.2 0 0 1 670.6 292.9M672.8 294.8A158.2 158.2 0 0 1 674.9 296.6M676.9 298.6A158.2 158.2 0 0 1 679.0 300.5M681.0 302.5A158.2 158.2 0 0 1 682.9 304.6M684.8 306.7A158.2 158.2 0 0 1 686.7 308.8M688.6 310.9A158.2 158.2 0 0 1 690.4 313.1M692.2 315.3A158.2 158.2 0 0 1 693.9 317.6M695.6 319.9A158.2 158.2 0 0 1 697.3 322.2M699.0 324.5A158.2 158.2 0 0 1 700.6 326.9M702.1 329.4A158.2 158.2 0 0 1 703.6 331.9M705.1 334.4A158.2 158.2 0 0 1 706.6 336.9M708.0 339.5A158.2 158.2 0 0 1 709.3 342.2M710.6 344.9A158.2 158.2 0 0 1 711.9 347.6M713.1 350.4A158.2 158.2 0 0 1 714.3 353.2M715.5 356.0A158.2 158.2 0 0 1 716.6 358.9M717.6 361.9A158.2 158.2 0 0 1 718.6 364.9M719.6 367.9A158.2 158.2 0 0 1 720.5 371.0M721.3 374.2A158.2 158.2 0 0 1 722.1 377.4M722.8 380.7A158.2 158.2 0 0 1 723.5 384.0M724.1 387.4A158.2 158.2 0 0 1 724.6 390.9M725.1 394.4A158.2 158.2 0 0 1 725.5 398.0M725.8 401.7A158.2 158.2 0 0 1 726.0 405.5M726.2 409.4A158.2 158.2 0 0 1 726.2 413.3" fill="none" stroke="#fff" stroke-width="1.15"/>
<!-- eyedropper cursor -->
<g transform="translate(709.3,393.7) rotate(-44)">
<path d="M0 0l1.8-2h9.7v-1h3.5l1.5 0.8h3.5a2.2 2.2 0 010 4.4h-3.5l-1.5 0.8h-3.5v-1h-9.7z" fill="none" stroke="#f3cfc6" stroke-width="1.7" stroke-linejoin="round"/>
<path d="M0 0l1.8-1.7h10v3.4h-10z" fill="#fff" stroke="#151010" stroke-width=".8"/>
<path d="M3.5-1.5v3M5.5-1.5v3M7.5-1.5v3M9.5-1.5v3" stroke="#999" stroke-width=".5"/>
<path d="M11.5-3h3.5l1.5 0.8h3.5a2.2 2.2 0 010 4.4h-3.5l-1.5 0.8h-3.5z" fill="#0c0808"/>
</g>
</svg>
<!-- DIALOG 描边 -->
<style>
#dlg{left:864px;top:379px;width:384px;height:316px;background:linear-gradient(90deg,#0a3ee0,#0a3ee0 50%,#08288f 99%);border-radius:7px 7px 0 0;box-shadow:1px 1px 2px rgba(0,0,0,.4)}
#dlgtitle{left:864px;top:379px;width:384px;height:29px;border-radius:7px 7px 0 0;background:linear-gradient(#0058ee 0%,#3593ff 4%,#288eff 6%,#127dff 8%,#036ffc 10%,#0262ee 14%,#0057e5 20%,#0054e3 24%,#0055eb 56%,#005bf5 66%,#026afe 76%,#0061fc 86%,#0055ea 92%,#0043cf 96%,#0038c0 100%)}
#dlgbody{left:867px;top:408px;width:378px;height:284px;background:#ececec;box-shadow:inset 0 0 0 1px #eef6ff}
.d{position:absolute;white-space:nowrap;line-height:16px;color:#000;font-size:12px}
.grp{position:absolute;border:1px solid #a9a9a9;border-radius:0}
.grplbl{position:absolute;background:#ececec;padding:0 5px;color:#000;line-height:16px;white-space:nowrap}
.inp{position:absolute;background:#fff;border:1px solid #7f9db9}
.xpbtn{position:absolute;border:1px solid #2a4676;border-radius:4px;background:linear-gradient(#fefefe,#f3f3f1 55%,#e2e2e0 90%,#cfd0d4);color:#000;text-align:center;line-height:16px;padding-top:2px}
.radio{position:absolute;width:13px;height:13px;border-radius:50%;border:1px solid #21557e;background:radial-gradient(circle at 35% 35%,#dcdcd7,#fff 70%)}
</style>
<div id="dlg" class="abs"></div>
<div id="dlgtitle" class="abs"></div>
<div id="dlgbody" class="abs"></div>
<div class="t" style="left:871px;top:386px;font-size:13px;font-weight:bold;color:#fff;text-shadow:1px 1px 1px #0a1883">描边</div>
<div class="abs" style="left:1222px;top:384px;width:21px;height:21px;border:1px solid #fff;border-radius:3px;background:radial-gradient(circle at 30% 25%,#f0a58c,#e0532e 45%,#c33a17 90%)"></div>
<svg class="abs" style="left:1222px;top:384px" width="21" height="21" viewBox="0 0 21 21"><path d="M6 6l9 9M15 6l-9 9" stroke="#fff" stroke-width="2.2"/></svg>
<!-- group 描边 -->
<div class="grp" style="left:877px;top:426px;width:250px;height:81px"></div>
<div class="grplbl" style="left:895px;top:418px">描边</div>
<div class="d" style="left:920px;top:444px;letter-spacing:.5px">宽度(<u>W</u>):</div>
<div class="inp" style="left:974px;top:442px;width:78px;height:20px"></div>
<div class="abs" style="left:979px;top:445px;width:36px;height:14px;background:#3668bd"></div>
<div class="d" style="left:980px;top:445px;color:#fff">3 像素</div>
<div class="d" style="left:942px;top:477px;letter-spacing:.4px">颜色:</div>
<div class="abs" style="left:976px;top:476px;width:74px;height:18px;background:#4c0902;box-shadow:0 0 0 1px rgba(225,180,170,.55)"></div>
<!-- group 位置 -->
<div class="grp" style="left:877px;top:524px;width:250px;height:42px"></div>
<div class="grplbl" style="left:895px;top:516px">位置</div>
<div class="radio" style="left:887px;top:544px"></div>
<div class="abs" style="left:891px;top:548px;width:5px;height:5px;border-radius:50%;background:radial-gradient(circle at 40% 35%,#6fdc5a,#21a121 70%)"></div>
<div class="d" style="left:903px;top:543px">内部(<u>I</u>)</div>
<div class="radio" style="left:961px;top:544px"></div>
<div class="d" style="left:977px;top:543px">居中(<u>C</u>)</div>
<div class="radio" style="left:1038px;top:544px"></div>
<div class="d" style="left:1054px;top:543px">居外(<u>U</u>)</div>
<!-- group 混合 -->
<div class="grp" style="left:877px;top:583px;width:250px;height:98px"></div>
<div class="grplbl" style="left:895px;top:575px">混合</div>
<div class="d" style="left:923px;top:600px;letter-spacing:.4px">模式(<u>M</u>):</div>
<div class="inp" style="left:974px;top:597px;width:143px;height:21px"></div>
<div class="d" style="left:981px;top:601px">正常</div>
<div class="abs" style="left:1100px;top:599px;width:15px;height:17px;border-radius:2px;background:linear-gradient(#d6e2fb,#b9cbf3 60%,#a9bdef);border:1px solid #b4c7ee"></div>
<svg class="abs" style="left:1100px;top:599px" width="15" height="17" viewBox="0 0 15 17"><path d="M4 6.5l3.5 3.5L11 6.5" fill="none" stroke="#4d6185" stroke-width="2"/></svg>
<div class="d" style="left:899px;top:631px;letter-spacing:.35px">不透明度(<u>O</u>):</div>
<div class="inp" style="left:974px;top:629px;width:78px;height:20px"></div>
<div class="d" style="left:980px;top:631px">100</div>
<div class="d" style="left:1057px;top:630px">%</div>
<div class="abs" style="left:887px;top:659px;width:13px;height:13px;border:1px solid #1c5180;background:linear-gradient(135deg,#dcdcd7,#fff)"></div>
<div class="d" style="left:903px;top:657px">保留透明区域(<u>P</u>)</div>
<!-- buttons -->
<div class="xpbtn" style="left:1143px;top:425px;width:91px;height:18px;box-shadow:inset 0 0 0 2px #c4d8f8,inset 0 -2px 0 0 #86a6e4">确定</div>
<div class="xpbtn" style="left:1143px;top:453px;width:91px;height:18px">取消</div>
</body>
</html>
